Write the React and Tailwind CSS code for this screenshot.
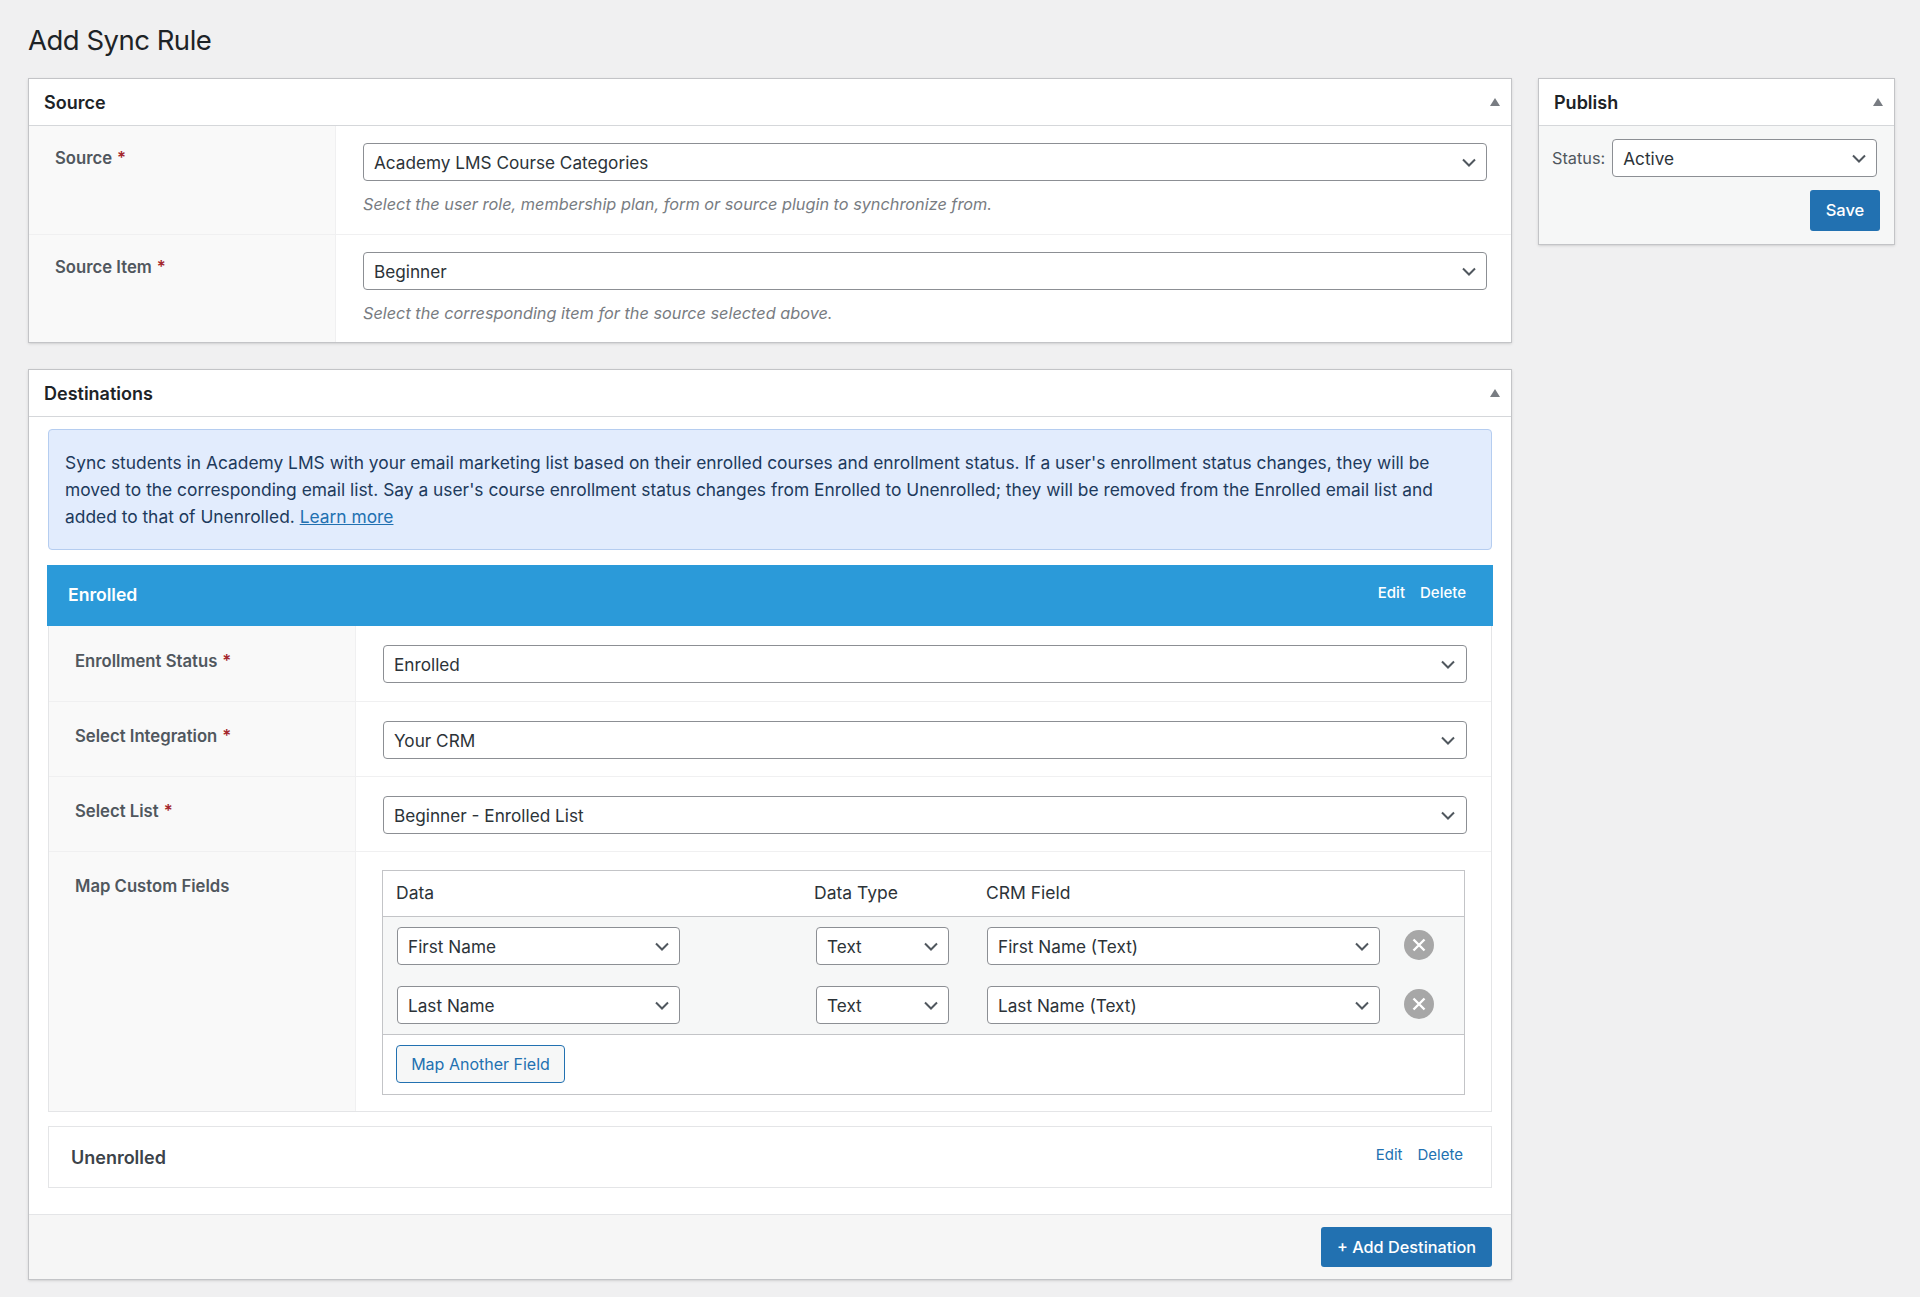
const font = { fontFamily: 'Inter, "Noto Sans", sans-serif' }

function Chevron({ className = '' }) {
  return (
    <svg width="16" height="16" viewBox="0 0 16 16" fill="none" className={className}>
      <path d="M2 5.5 8 11.5l6-6" stroke="#50575e" strokeWidth="2" />
    </svg>
  )
}

function Triangle() {
  return (
    <svg width="10" height="8" viewBox="0 0 10 8">
      <path d="M5 0l5 8H0z" fill="#787c82" />
    </svg>
  )
}

function SelectBox({ value, className = '' }) {
  return (
    <div className={`flex h-[38px] items-center justify-between rounded-[4px] border border-[#8c8f94] bg-white pl-[10px] pr-[9px] text-[17.2px] text-[#2c3338] ${className}`}>
      <span className="pt-px">{value}</span>
      <Chevron />
    </div>
  )
}

function Label({ children, required }) {
  return (
    <div className="text-[16.7px] leading-[24px] font-semibold text-[#50575e]">
      {children}
      {required && <span className="ml-[5px] text-[#a4262c]">*</span>}
    </div>
  )
}

function PanelHeader({ title }) {
  return (
    <div className="flex h-[47px] items-center justify-between border-b border-[#d5d7da] bg-white pl-[15px] pr-[11px]">
      <h2 className="text-[18px] font-semibold text-[#1d2327]">{title}</h2>
      <Triangle />
    </div>
  )
}

function SourceRow({ label, value, help, first }) {
  return (
    <div className={`flex ${first ? 'h-[109px] border-b border-[#f0f0f1]' : 'h-[107px]'}`}>
      <div className="w-[307px] shrink-0 border-r border-[#f0f0f1] bg-[#f9f9f9] pl-[26px] pt-[20px]">
        <Label required>{label}</Label>
      </div>
      <div className="flex-1 pl-[27px] pr-[24px] pt-[17px]">
        <SelectBox value={value} />
        <p className="mt-[13px] text-[16.3px] italic leading-[20px] text-[#787c82]">{help}</p>
      </div>
    </div>
  )
}

function DestRow({ label, value, first }) {
  return (
    <div className={`flex border-b border-[#f0f0f1] ${first ? 'h-[76px]' : 'h-[75px]'}`}>
      <div className={`w-[307px] shrink-0 border-r border-[#f0f0f1] bg-[#f9f9f9] pl-[26px] ${first ? 'pt-[23px]' : 'pt-[22px]'}`}>
        <Label required>{label}</Label>
      </div>
      <div className="flex-1 pl-[27px] pr-[24px] pt-[19px]">
        <SelectBox value={value} className="pr-[10px]" />
      </div>
    </div>
  )
}

function FieldRow({ data, type, crm }) {
  return (
    <div className="flex items-center">
      <SelectBox value={data} className="w-[283px]" />
      <SelectBox value={type} className="ml-[136px] w-[133px]" />
      <SelectBox value={crm} className="ml-[38px] w-[393px]" />
      <span className="ml-[24px] -mt-[2px] flex h-[30px] w-[30px] items-center justify-center rounded-full bg-[#a7a7a7]">
        <svg width="14" height="14" viewBox="0 0 14 14" fill="none">
          <path d="M1.5 1.5l11 11M12.5 1.5l-11 11" stroke="#fff" strokeWidth="2.4" />
        </svg>
      </span>
    </div>
  )
}

export default function App() {
  return (
    <div style={font} className="min-h-screen bg-[#f0f0f1] pl-[28px] pr-[25px] pt-[21px] text-[#2c3338]">
      <h1 className="h-[57px] text-[27.5px] leading-[38px] tracking-[-0.5px] text-[#1d2327]">Add Sync Rule</h1>

      <div className="flex items-start gap-[26px]">
        <div className="w-[1484px] shrink-0">
          <section className="border border-[#c3c4c7] bg-white shadow-sm">
            <PanelHeader title="Source" />
            <SourceRow
              first
              label="Source"
              value="Academy LMS Course Categories"
              help="Select the user role, membership plan, form or source plugin to synchronize from."
            />
            <SourceRow
              label="Source Item"
              value="Beginner"
              help="Select the corresponding item for the source selected above."
            />
          </section>

          <section className="mt-[26px] border border-[#c3c4c7] bg-white shadow-sm">
            <PanelHeader title="Destinations" />
            <div className="px-[19px] pb-[26px] pt-[12px]">
              <div className="h-[121px] rounded-[4px] border border-[#b5cdf0] bg-[#e2ecfd] pl-[16px] pr-[30px] pt-[19px] text-[17.36px] leading-[27px] text-[#1d3a5c]">
                Sync students in Academy LMS with your email marketing list based on their enrolled courses and enrollment status. If a user's enrollment status changes, they will be moved to the corresponding email list. Say a user's course enrollment status changes from Enrolled to Unenrolled; they will be removed from the Enrolled email list and added to that of Unenrolled.{' '}
                <a href="#" className="text-[#2271b1] underline">Learn more</a>
              </div>

              <div className="-mx-px mt-[15px] flex h-[61px] items-center justify-between bg-[#2b9ad9] pl-[21px] pr-[27px] text-white">
                <span className="text-[17.6px] font-semibold">Enrolled</span>
                <span className="-mt-[4px] flex gap-[15px] text-[15px] font-medium">
                  <span>Edit</span>
                  <span>Delete</span>
                </span>
              </div>

              <div className="border-x border-b border-[#e4e5e7]">
                <DestRow first label="Enrollment Status" value="Enrolled" />
                <DestRow label="Select Integration" value="Your CRM" />
                <DestRow label="Select List" value="Beginner - Enrolled List" />
                <div className="flex h-[259px]">
                  <div className="w-[307px] shrink-0 border-r border-[#f0f0f1] bg-[#f9f9f9] pl-[26px] pt-[22px]">
                    <Label>Map Custom Fields</Label>
                  </div>
                  <div className="flex-1 pl-[26px] pr-[26px] pt-[18px]">
                    <div className="h-[225px] border border-[#c3c4c7]">
                      <div className="flex h-[46px] items-center border-b border-[#c3c4c7] text-[17.5px]">
                        <span className="w-[431px] pl-[13px]">Data</span>
                        <span className="w-[172px]">Data Type</span>
                        <span>CRM Field</span>
                      </div>
                      <div className="flex h-[118px] flex-col gap-[21px] border-b border-[#c3c4c7] bg-[#f6f7f7] pl-[14px] pt-[10px]">
                        <FieldRow data="First Name" type="Text" crm="First Name (Text)" />
                        <FieldRow data="Last Name" type="Text" crm="Last Name (Text)" />
                      </div>
                      <div className="pl-[13px] pt-[10px]">
                        <button className="h-[38px] w-[169px] rounded-[4px] border border-[#2271b1] bg-[#f6f7f7] text-[16px] text-[#2271b1]">
                          Map Another Field
                        </button>
                      </div>
                    </div>
                  </div>
                </div>
              </div>

              <div className="mt-[14px] flex h-[62px] items-center justify-between border border-[#e4e5e7] pl-[22px] pr-[28px]">
                <span className="text-[18px] font-semibold text-[#3c434a]">Unenrolled</span>
                <span className="-mt-[4px] flex gap-[15px] text-[15px] text-[#2271b1]">
                  <span>Edit</span>
                  <span>Delete</span>
                </span>
              </div>
            </div>

            <div className="flex h-[65px] items-center justify-end border-t border-[#e4e5e7] bg-[#f6f6f6] pr-[19px]">
              <button className="h-[40px] w-[171px] rounded-[3px] bg-[#2271b1] text-[16.3px] font-medium text-white">
                + Add Destination
              </button>
            </div>
          </section>
        </div>

        <aside className="w-[357px] shrink-0 border border-[#c3c4c7] bg-[#f6f7f7] shadow-sm">
          <PanelHeader title="Publish" />
          <div className="h-[118px] pl-[13px] pr-[17px] pt-[13px]">
            <div className="flex items-center gap-[7px]">
              <span className="text-[16.3px] text-[#50575e]">Status:</span>
              <SelectBox value="Active" className="flex-1" />
            </div>
            <div className="mt-[13px] flex justify-end">
              <button className="-mr-[3px] h-[41px] w-[70px] rounded-[3px] bg-[#2271b1] text-[16.5px] font-medium text-white">
                Save
              </button>
            </div>
          </div>
        </aside>
      </div>
    </div>
  )
}
